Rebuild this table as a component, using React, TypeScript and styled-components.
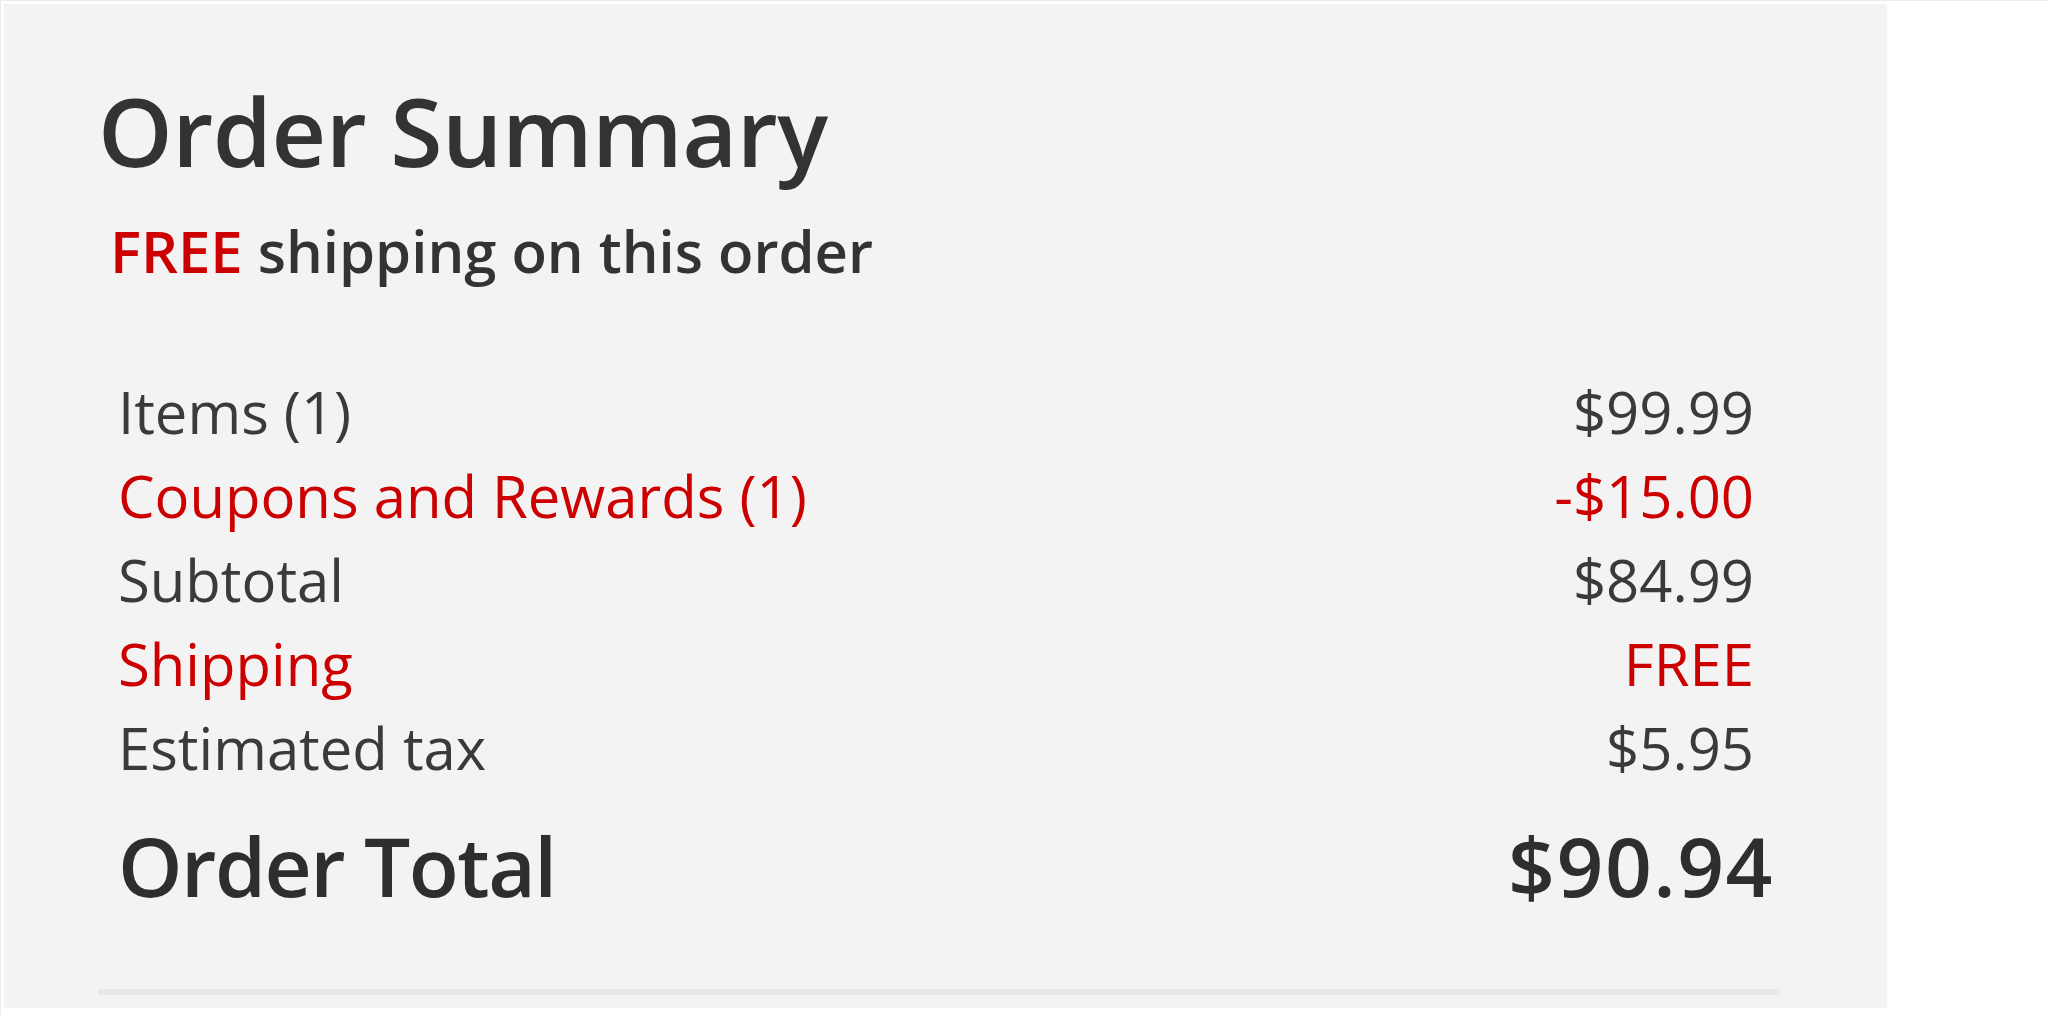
import React from 'react'
import styled, { createGlobalStyle } from 'styled-components'

const GlobalStyle = createGlobalStyle`
  html, body {
    margin: 0;
    padding: 0;
    background: #ffffff;
  }
  body {
    font-family: "Open Sans", "Noto Sans", "Liberation Sans", sans-serif;
    color: #333333;
  }
`

const RED = '#cc0000'

export const Frame = styled.div`
  width: 2048px;
  height: 1016px;
  box-sizing: border-box;
  border-top: 1px solid #ececec;
  border-left: 1px solid #ececec;
  padding: 3px 0 0 3px;
  overflow: hidden;
`

export const Panel = styled.section`
  width: 1883px;
  height: 1004px;
  box-sizing: border-box;
  background: #f3f3f3;
  padding: 69px 107px 0 94px;
  display: flex;
  flex-direction: column;
`

const Heading = styled.h2`
  margin: 0;
  font-size: 95px;
  line-height: 114px;
  font-weight: 600;
  color: #333333;
  letter-spacing: -0.5px;
`

const Shipping = styled.p`
  margin: 29px 0 0 12px;
  font-size: 58px;
  line-height: 70px;
  font-weight: 600;
  color: #333333;

  span {
    color: ${RED};
  }
`

const Lines = styled.div`
  margin: 84px 26px 0 20px;
  display: flex;
  flex-direction: column;
`

const Line = styled.div<{ $red?: boolean }>`
  display: flex;
  justify-content: space-between;
  font-size: 58px;
  line-height: 84px;
  font-weight: 400;
  color: ${(p) => (p.$red ? RED : '#3a3a3a')};
`

const TotalRow = styled.div`
  margin: 25px 6px 0 20px;
  display: flex;
  justify-content: space-between;
  font-size: 82px;
  line-height: 101px;
  font-weight: 600;
  color: #2e2e2e;
`

const TotalText = styled.span<{ $spacing: number }>`
  letter-spacing: ${(p) => p.$spacing}px;
`

const Divider = styled.hr`
  margin: 73px 0 0;
  border: 0;
  height: 6px;
  background: #e8e8e8;
`

const lines = [
  { label: 'Items (1)', value: '$99.99' },
  { label: 'Coupons and Rewards (1)', value: '-$15.00', red: true },
  { label: 'Subtotal', value: '$84.99' },
  { label: 'Shipping', value: 'FREE', red: true },
  { label: 'Estimated tax', value: '$5.95' },
]

function App() {
  return (
    <>
      <GlobalStyle />
      <Frame>
        <Panel>
          <Heading>Order Summary</Heading>
          <Shipping>
            <span>FREE</span> shipping on this order
          </Shipping>
          <Lines>
            {lines.map((l) => (
              <Line key={l.label} $red={l.red}>
                <span>{l.label}</span>
                <span>{l.value}</span>
              </Line>
            ))}
          </Lines>
          <TotalRow>
            <TotalText $spacing={-1.5}>Order Total</TotalText>
            <TotalText $spacing={1.5}>$90.94</TotalText>
          </TotalRow>
          <Divider />
        </Panel>
      </Frame>
    </>
  )
}

export default App
